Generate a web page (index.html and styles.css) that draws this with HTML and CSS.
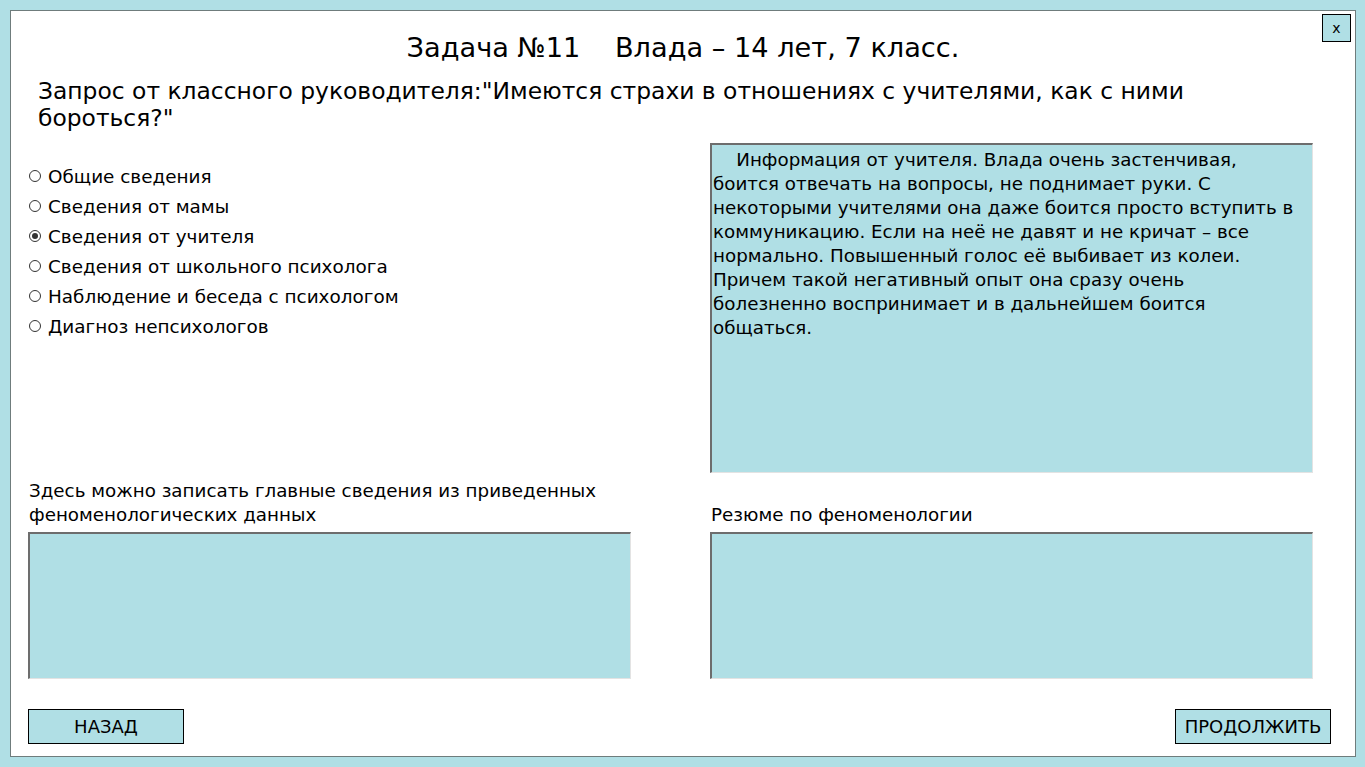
FILE: index.html
```html
<!DOCTYPE html>
<html lang="ru">
<head>
<meta charset="utf-8">
<title>Задача №11</title>
<link rel="stylesheet" href="styles.css">
</head>
<body>
<div class="window">
  <button class="close">x</button>
  <h1 class="title">Задача №11&nbsp;&nbsp;&nbsp; Влада – 14 лет, 7 класс.</h1>
  <p class="request">Запрос от классного руководителя:"Имеются страхи в отношениях с учителями, как с ними бороться?"</p>
  <div class="top">
    <ul class="options">
      <li><span class="radio"></span>Общие сведения</li>
      <li><span class="radio"></span>Сведения от мамы</li>
      <li><span class="radio checked"></span>Сведения от учителя</li>
      <li><span class="radio"></span>Сведения от школьного психолога</li>
      <li><span class="radio"></span>Наблюдение и беседа с психологом</li>
      <li><span class="radio"></span>Диагноз непсихологов</li>
    </ul>
    <div class="box info">&nbsp;&nbsp;&nbsp; Информация от учителя. Влада очень застенчивая, боится отвечать на вопросы, не поднимает руки. С некоторыми учителями она даже боится просто вступить в коммуникацию. Если на неё не давят и не кричат – все нормально. Повышенный голос её выбивает из колеи. Причем такой негативный опыт она сразу очень болезненно воспринимает и в дальнейшем боится общаться.</div>
  </div>
  <div class="bottom">
    <div class="field">
      <div class="label">Здесь можно записать главные сведения из приведенных феноменологических данных</div>
      <div class="box note"></div>
    </div>
    <div class="field">
      <div class="label">Резюме по феноменологии</div>
      <div class="box note"></div>
    </div>
  </div>
  <div class="buttons">
    <button class="btn">НАЗАД</button>
    <button class="btn">ПРОДОЛЖИТЬ</button>
  </div>
</div>
</body>
</html>
```
FILE: styles.css
```css
* { box-sizing: border-box; }
html, body { margin: 0; padding: 0; }
body {
  background: #b0dfe5;
  font-family: "DejaVu Sans", Verdana, sans-serif;
  color: #000;
  padding: 10px 9px 10px 10px;
  height: 767px;
}
.window {
  position: relative;
  background: #fff;
  border: 1px solid #6f7c7c;
  height: 747px;
  padding: 0 0 0 17px;
}
.close {
  position: absolute;
  top: 3px;
  right: 4px;
  width: 29px;
  height: 28px;
  background: #b0dfe5;
  border: 1px solid #000;
  font: 14px "DejaVu Sans", sans-serif;
  padding: 0;
  color: #000;
}
.title {
  margin: 0;
  padding-top: 21px;
  text-align: center;
  font-weight: normal;
  font-size: 27.2px;
  line-height: 32px;
  padding-right: 17px;
}
.request {
  margin: 14px 0 0 10px;
  font-size: 23.4px;
  line-height: 27px;
  width: 1190px;
}
.top {
  display: flex;
  margin-top: 11px;
}
.options {
  list-style: none;
  margin: 18px 0 0 0;
  padding: 0;
  width: 682px;
}
.options li {
  display: flex;
  align-items: center;
  font-size: 18.4px;
  height: 30px;
}
.radio {
  width: 12px;
  height: 12px;
  border: 1px solid #333;
  border-radius: 50%;
  margin: 0 7px 0 1px;
  display: inline-flex;
  align-items: center;
  justify-content: center;
  background: #fff;
}
.radio.checked::after {
  content: "";
  width: 6px;
  height: 6px;
  border-radius: 50%;
  background: #333;
}
.box {
  background: #b0dfe5;
  border-top: 2px solid #6d6d6d;
  border-left: 2px solid #6d6d6d;
  border-right: 1px solid #e3e3e3;
  border-bottom: 1px solid #e3e3e3;
}
.info {
  width: 603px;
  height: 330px;
  padding: 3px 12px 3px 1px;
  font-size: 18.3px;
  line-height: 24px;
}
.bottom {
  display: flex;
  gap: 79px;
  margin-top: 6px;
}
.field {
  width: 603px;
  display: flex;
  flex-direction: column;
  justify-content: flex-end;
}
.label {
  font-size: 18.3px;
  line-height: 24px;
  margin-bottom: 5px;
  padding-left: 1px;
}
.note {
  height: 147px;
}
.buttons {
  display: flex;
  justify-content: space-between;
  margin-top: 30px;
  padding-right: 24px;
}
.btn {
  width: 156px;
  height: 35px;
  background: #b0dfe5;
  border: 1px solid #000;
  font: 18px "DejaVu Sans", sans-serif;
  color: #000;
  padding: 0;
}
```
